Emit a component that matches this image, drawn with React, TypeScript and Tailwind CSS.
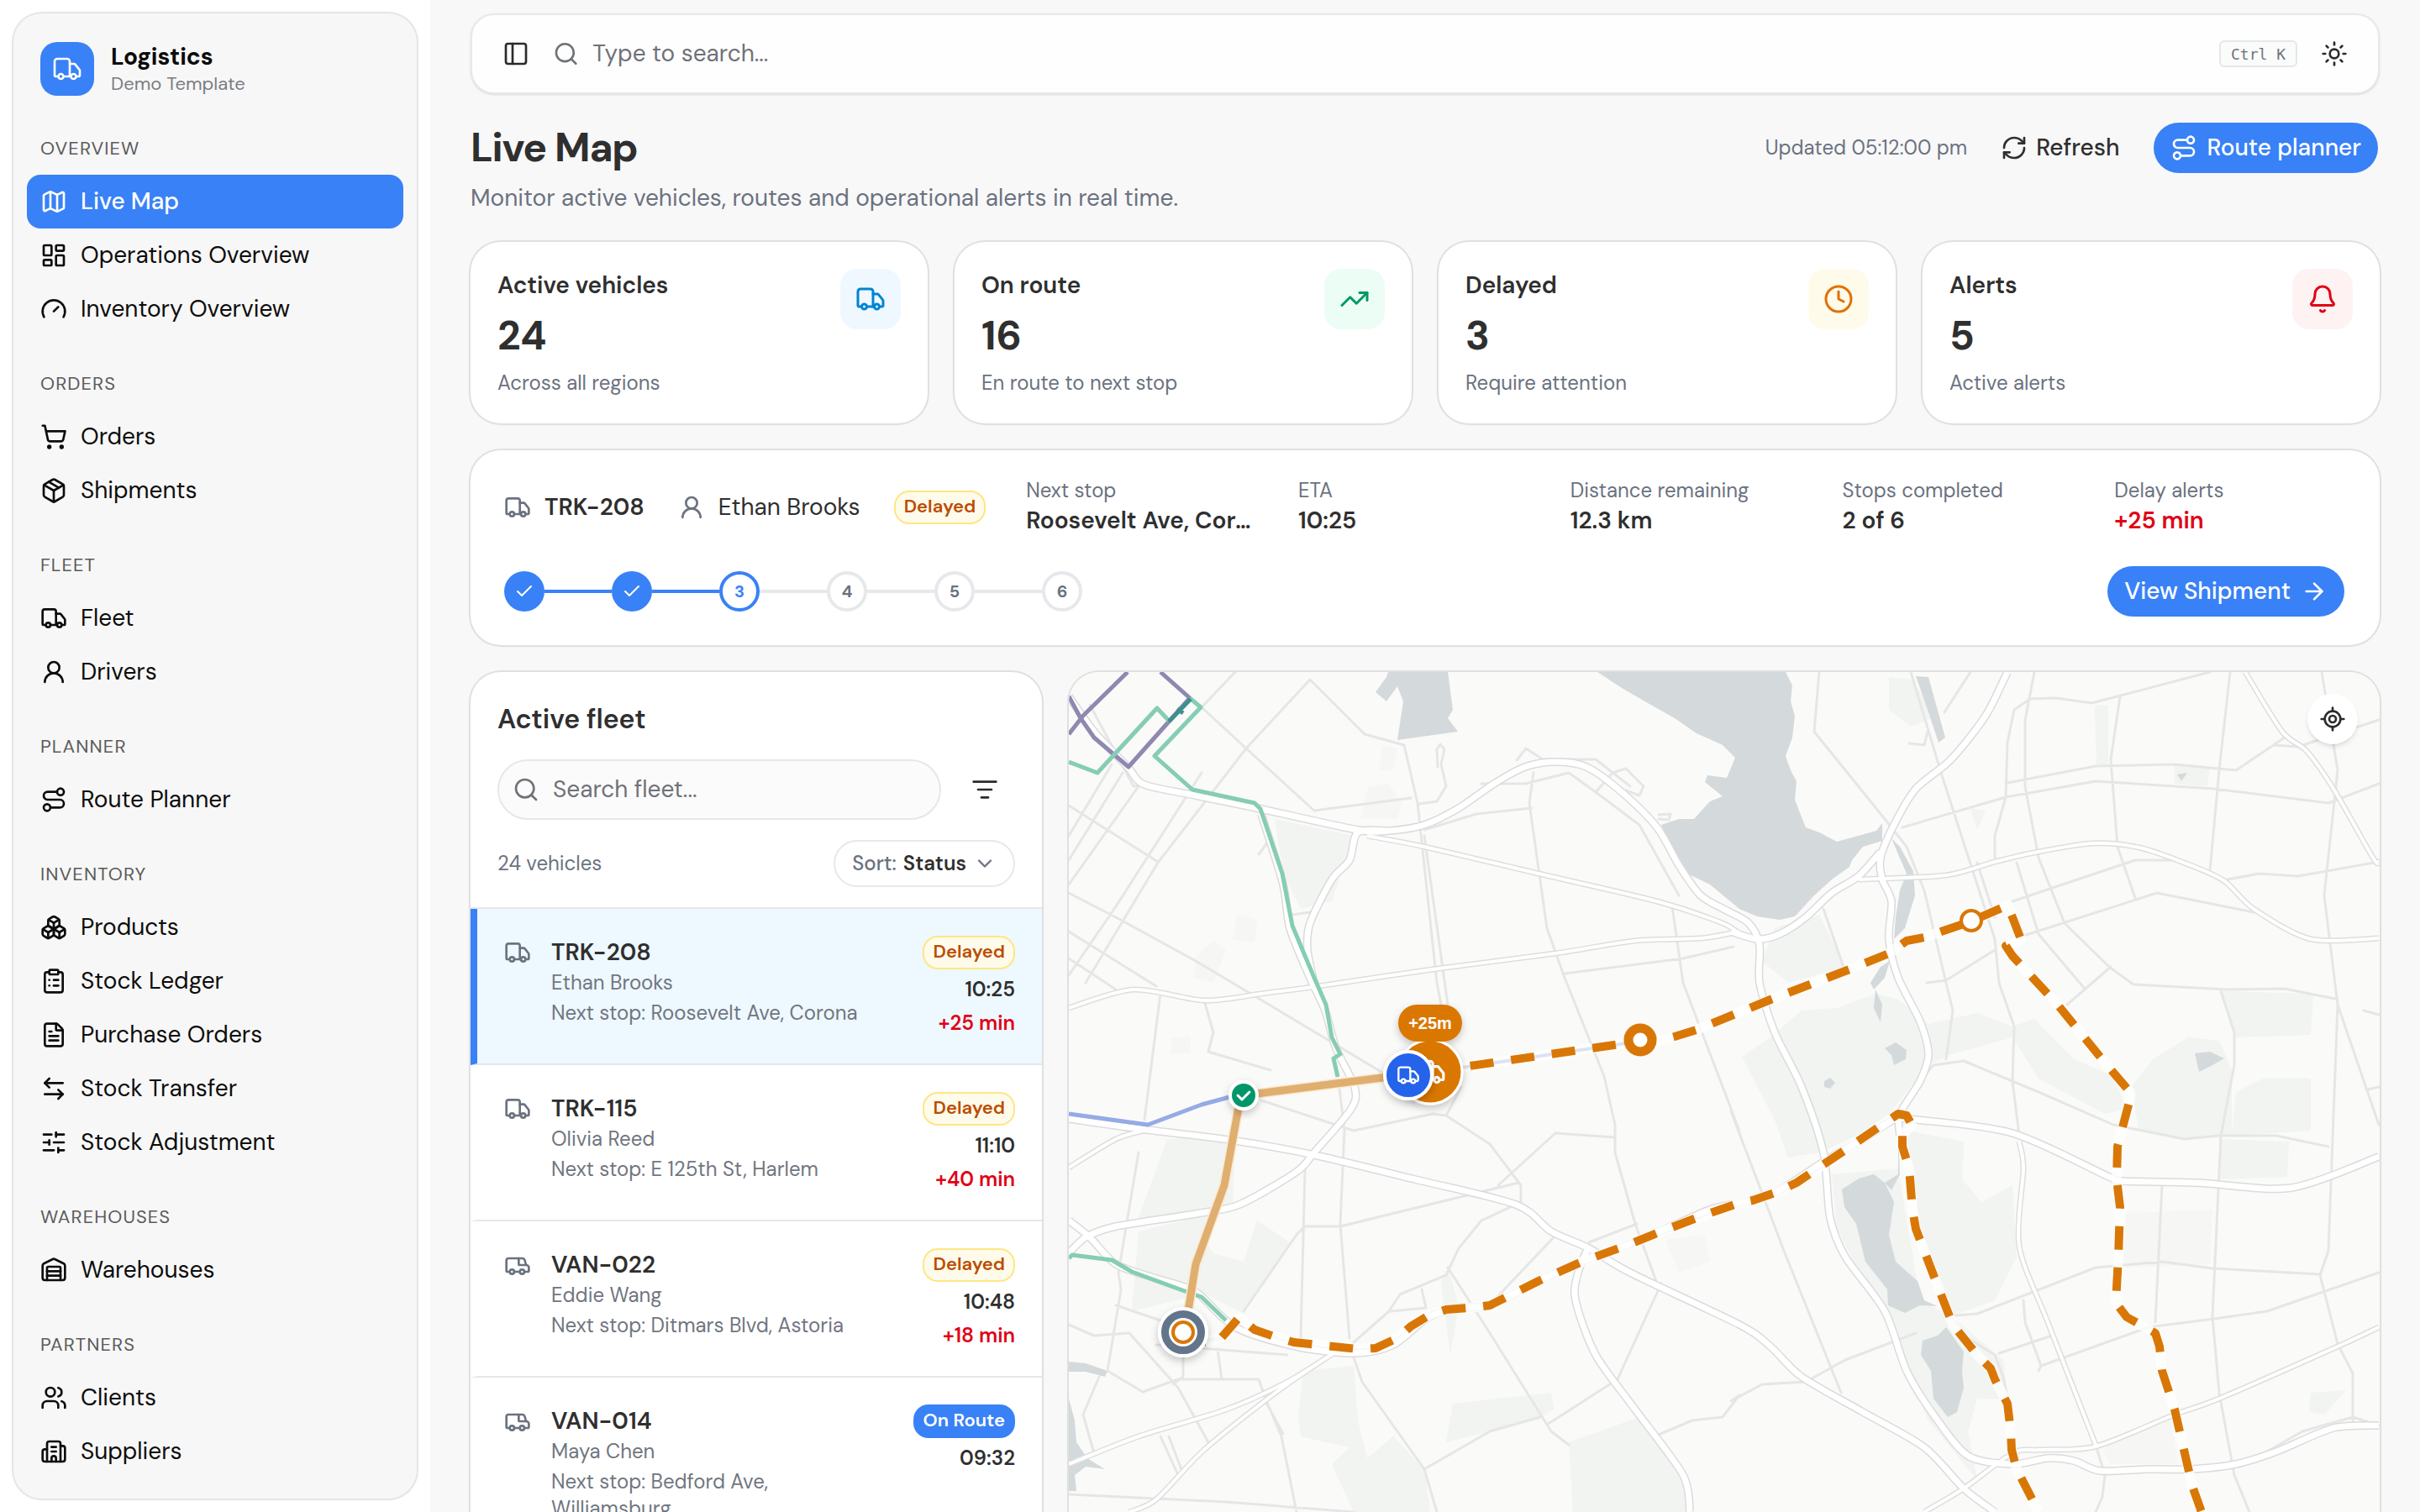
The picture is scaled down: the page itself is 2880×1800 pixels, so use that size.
import React from "react";
import {
  ArrowLeftRight,
  ArrowRight,
  Bell,
  Boxes,
  Building2,
  Check,
  ChevronDown,
  ClipboardList,
  Clock,
  FileText,
  Gauge,
  LayoutDashboard,
  ListFilter,
  LocateFixed,
  Map as MapIcon,
  Package,
  PanelLeft,
  RefreshCw,
  Route,
  Search,
  ShoppingCart,
  SlidersHorizontal,
  Sun,
  TrendingUp,
  Truck,
  UserRound,
  Users,
  Warehouse,
} from "lucide-react";

type IconType = React.ComponentType<{ className?: string; strokeWidth?: number }>;

/* ---------- Sidebar ---------- */

const navGroups: { label: string; items: { name: string; icon: IconType; active?: boolean }[] }[] = [
  {
    label: "Overview",
    items: [
      { name: "Live Map", icon: MapIcon, active: true },
      { name: "Operations Overview", icon: LayoutDashboard },
      { name: "Inventory Overview", icon: Gauge },
    ],
  },
  {
    label: "Orders",
    items: [
      { name: "Orders", icon: ShoppingCart },
      { name: "Shipments", icon: Package },
    ],
  },
  {
    label: "Fleet",
    items: [
      { name: "Fleet", icon: Truck },
      { name: "Drivers", icon: UserRound },
    ],
  },
  { label: "Planner", items: [{ name: "Route Planner", icon: Route }] },
  {
    label: "Inventory",
    items: [
      { name: "Products", icon: Boxes },
      { name: "Stock Ledger", icon: ClipboardList },
      { name: "Purchase Orders", icon: FileText },
      { name: "Stock Transfer", icon: ArrowLeftRight },
      { name: "Stock Adjustment", icon: SlidersHorizontal },
    ],
  },
  { label: "Warehouses", items: [{ name: "Warehouses", icon: Warehouse }] },
  {
    label: "Partners",
    items: [
      { name: "Clients", icon: Users },
      { name: "Suppliers", icon: Building2 },
    ],
  },
];

function Sidebar() {
  return (
    <aside className="w-[512px] shrink-0 bg-white p-4">
      <div className="h-full overflow-hidden rounded-[34px] bg-[#f7f7f7] p-4 shadow-sm ring-2 ring-[#e5e5e5]">
        <div className="flex h-[100px] items-center gap-5 px-4">
          <span className="flex size-16 items-center justify-center rounded-[20px] bg-[#3981f6] text-white">
            <Truck className="size-9" strokeWidth={1.75} />
          </span>
          <div>
            <div className="text-[28px] leading-9 font-bold text-[#0a0a0a]">Logistics</div>
            <div className="text-[22px] leading-7 text-[#7a7d82]">Demo Template</div>
          </div>
        </div>
        <nav aria-label="Main" className="mt-3 flex flex-col gap-6">
          {navGroups.map((group) => (
            <section key={group.label}>
              <h2 className="flex h-16 items-center px-4 text-[22px] tracking-wider text-[#5b5b5b] uppercase">
                {group.label}
              </h2>
              <ul>
                {group.items.map(({ name, icon: Icon, active }) => (
                  <li key={name}>
                    <a
                      href="#"
                      aria-current={active ? "page" : undefined}
                      className={
                        active
                          ? "flex h-16 items-center gap-4 rounded-2xl bg-[#3981f6] px-4 text-[28px] font-medium text-white"
                          : "flex h-16 items-center gap-4 rounded-2xl px-4 text-[28px] text-[#0d0d0d]"
                      }
                    >
                      <Icon className="size-8" strokeWidth={2} />
                      {name}
                    </a>
                  </li>
                ))}
              </ul>
            </section>
          ))}
        </nav>
      </div>
    </aside>
  );
}

/* ---------- Header ---------- */

function TopBar() {
  return (
    <header className="flex h-24 items-center gap-7 rounded-[28px] border-2 border-[#e7e8ec] bg-[#fefefe] px-9 shadow-sm">
      <button type="button" aria-label="Toggle sidebar" className="text-[#2b2b2b]">
        <PanelLeft className="size-8" />
      </button>
      <label className="flex flex-1 items-center gap-4 text-[#6f7278]">
        <Search className="size-8" />
        <input
          type="text"
          aria-label="Search"
          placeholder="Type to search..."
          className="w-full bg-transparent text-[28px] text-[#2b2b2b] outline-none placeholder:text-[#6f7278]"
        />
      </label>
      <kbd className="flex h-8 items-center rounded-md border-2 border-[#e5e7eb] bg-[#fafbfb] px-3 font-['DejaVu_Sans_Mono',monospace] text-[18px] text-[#6f7278]">
        Ctrl K
      </kbd>
      <button type="button" aria-label="Toggle theme" className="text-[#2b2b2b]">
        <Sun className="size-8" />
      </button>
    </header>
  );
}

function PageHeading() {
  return (
    <div className="mt-8 flex items-start justify-between">
      <div>
        <h1 className="text-[48px] leading-16 font-bold tracking-tight text-[#2f2f2f]">Live Map</h1>
        <p className="mt-2 text-[28px] leading-10 text-[#6b7280]">
          Monitor active vehicles, routes and operational alerts in real time.
        </p>
      </div>
      <div className="flex h-16 items-center gap-5 pr-0.5">
        <span className="text-[24px] text-[#6b7280]">Updated 05:12:00 pm</span>
        <button type="button" className="flex h-15 items-center gap-2.5 px-5 text-[28px] font-medium text-[#2f2f2f]">
          <RefreshCw className="size-8" />
          Refresh
        </button>
        <button
          type="button"
          className="flex h-15 items-center gap-3 rounded-full bg-[#3981f6] px-5 text-[28px] font-medium text-white"
        >
          <Route className="size-8" />
          Route planner
        </button>
      </div>
    </div>
  );
}

/* ---------- Statistics ---------- */

const stats: { title: string; value: string; note: string; icon: IconType; tone: string }[] = [
  { title: "Active vehicles", value: "24", note: "Across all regions", icon: Truck, tone: "bg-[#f0f8ff] text-[#0084d1]" },
  { title: "On route", value: "16", note: "En route to next stop", icon: TrendingUp, tone: "bg-[#ecfdf5] text-[#009966]" },
  { title: "Delayed", value: "3", note: "Require attention", icon: Clock, tone: "bg-[#fffbeb] text-[#e17100]" },
  { title: "Alerts", value: "5", note: "Active alerts", icon: Bell, tone: "bg-[#fef2f2] text-[#e10015]" },
];

function Stats() {
  return (
    <div className="mt-8 grid grid-cols-4 gap-8">
      {stats.map(({ title, value, note, icon: Icon, tone }) => (
        <article
          key={title}
          className="flex items-start justify-between rounded-[36px] bg-white px-8 py-8 shadow-sm ring-2 ring-[#e0e0e0]"
        >
          <div>
            <h2 className="text-[28px] leading-10 font-semibold text-[#2f2f2f]">{title}</h2>
            <p className="mt-2 text-[48px] leading-16 font-bold text-[#2f2f2f]">{value}</p>
            <p className="mt-2 text-[24px] leading-8 text-[#6b7280]">{note}</p>
          </div>
          <span className={`flex size-18 items-center justify-center rounded-[20px] ${tone}`}>
            <Icon className="size-9" />
          </span>
        </article>
      ))}
    </div>
  );
}

/* ---------- Selected shipment ---------- */

function StatusBadge({ status }: { status: string }) {
  return status === "Delayed" ? (
    <span className="flex h-10 items-center rounded-[18px] border-2 border-[#fee685] bg-[#fffbeb] px-2.5 pb-1 text-[22px] font-semibold text-[#bb4d00]">
      Delayed
    </span>
  ) : (
    <span className="flex h-10 items-center rounded-[18px] bg-[#3981f6] px-3 pb-1 text-[22px] font-semibold text-white">
      {status}
    </span>
  );
}

const shipmentFacts = [
  { label: "Next stop", value: "Roosevelt Ave, Corona" },
  { label: "ETA", value: "10:25" },
  { label: "Distance remaining", value: "12.3 km" },
  { label: "Stops completed", value: "2 of 6" },
  { label: "Delay alerts", value: "+25 min", alert: true },
];

function Steps() {
  const current = 3;
  return (
    <ol className="flex items-center">
      {[1, 2, 3, 4, 5, 6].map((n) => (
        <li key={n} className="flex items-center">
          {n > 1 && <span className={n <= current ? "h-1 w-20 bg-[#3981f6]" : "h-1 w-20 bg-[#e7e8ec]"} />}
          {n < current ? (
            <span className="flex size-12 items-center justify-center rounded-full bg-[#3981f6] text-white">
              <Check className="size-6" aria-label={`Stop ${n} completed`} />
            </span>
          ) : (
            <span
              className={
                n === current
                  ? "flex size-12 items-center justify-center rounded-full border-4 border-[#3981f6] bg-white text-[20px] font-bold text-[#3981f6]"
                  : "flex size-12 items-center justify-center rounded-full border-4 border-[#e7e8ec] bg-white text-[20px] font-bold text-[#6b7280]"
              }
            >
              {n}
            </span>
          )}
        </li>
      ))}
    </ol>
  );
}

function ShipmentCard() {
  return (
    <section
      aria-label="Selected shipment"
      className="mt-8 rounded-[36px] bg-white px-10 py-8 shadow-sm ring-2 ring-[#e0e0e0]"
    >
      <div className="flex items-center gap-12">
        <div className="flex items-center gap-10">
          <span className="flex items-center gap-4 text-[28px] font-semibold text-[#2f2f2f]">
            <Truck className="size-8 text-[#6b7280]" />
            TRK-208
          </span>
          <span className="flex items-center gap-4 text-[28px] text-[#2f2f2f]">
            <UserRound className="size-8 text-[#6b7280]" />
            Ethan Brooks
          </span>
          <StatusBadge status="Delayed" />
        </div>
        <dl className="grid flex-1 grid-cols-5 gap-12">
          {shipmentFacts.map((fact) => (
            <div key={fact.label} className="min-w-0">
              <dt className="text-[24px] leading-8 text-[#6b7280]">{fact.label}</dt>
              <dd
                className={
                  fact.alert
                    ? "truncate text-[28px] leading-10 font-semibold text-[#e10015]"
                    : "truncate text-[28px] leading-10 font-semibold text-[#2f2f2f]"
                }
              >
                {fact.value}
              </dd>
            </div>
          ))}
        </dl>
      </div>
      <div className="mt-8 flex h-16 items-center justify-between pr-0.5">
        <Steps />
        <button
          type="button"
          className="flex h-15 items-center gap-3 rounded-full bg-[#3981f6] px-5 text-[28px] font-medium text-white"
        >
          View Shipment
          <ArrowRight className="size-8" />
        </button>
      </div>
    </section>
  );
}

/* ---------- Fleet list ---------- */

function Van({ className }: { className?: string }) {
  return (
    <svg
      viewBox="0 0 24 24"
      fill="none"
      stroke="currentColor"
      strokeWidth={2}
      strokeLinecap="round"
      strokeLinejoin="round"
      className={className}
      aria-hidden="true"
    >
      <path d="M13 6v5a1 1 0 0 0 1 1h6.102a1 1 0 0 1 .712.298l.898.91a1 1 0 0 1 .288.702V17a1 1 0 0 1-1 1h-3" />
      <path d="M5 18H3a1 1 0 0 1-1-1V8a2 2 0 0 1 2-2h12c1.1 0 2.1.8 2.4 1.8l1.176 4.2" />
      <path d="M9 18h5" />
      <circle cx="16" cy="18" r="2" />
      <circle cx="7" cy="18" r="2" />
    </svg>
  );
}

const fleet = [
  { id: "TRK-208", driver: "Ethan Brooks", stop: "Roosevelt Ave, Corona", status: "Delayed", eta: "10:25", delay: "+25 min", icon: Truck, selected: true },
  { id: "TRK-115", driver: "Olivia Reed", stop: "E 125th St, Harlem", status: "Delayed", eta: "11:10", delay: "+40 min", icon: Truck },
  { id: "VAN-022", driver: "Eddie Wang", stop: "Ditmars Blvd, Astoria", status: "Delayed", eta: "10:48", delay: "+18 min", icon: Van },
  { id: "VAN-014", driver: "Maya Chen", stop: "Bedford Ave, Williamsburg", status: "On Route", eta: "09:32", icon: Van },
];

function FleetPanel() {
  return (
    <section aria-label="Active fleet" className="h-[1040px] overflow-hidden rounded-[36px] bg-white shadow-sm ring-2 ring-[#e0e0e0]">
      <div className="px-8 pt-8 pb-6">
        <h2 className="text-[32px] leading-12 font-semibold text-[#2f2f2f]">Active fleet</h2>
        <div className="mt-6 flex items-center gap-4">
          <label className="flex h-18 flex-1 items-center gap-4 rounded-full border-2 border-[#e5e7eb] bg-[#fbfbfb] px-4 text-[#6f7278]">
            <Search className="size-8 shrink-0" />
            <input
              type="text"
              aria-label="Search fleet"
              placeholder="Search fleet..."
              className="w-full bg-transparent text-[28px] text-[#2f2f2f] outline-none placeholder:text-[#6f7278]"
            />
          </label>
          <button type="button" aria-label="Filter" className="flex size-18 items-center justify-center text-[#2b2b2b]">
            <ListFilter className="size-8" />
          </button>
        </div>
        <div className="mt-6 flex items-center justify-between">
          <span className="text-[24px] text-[#6b7280]">24 vehicles</span>
          <label className="flex h-14 items-center gap-2 rounded-full border-2 border-[#e7e8ec] px-5 text-[24px] font-medium text-[#6b7280]">
            Sort:
            <select className="field-sizing-content appearance-none bg-transparent font-semibold text-[#2f2f2f] outline-none">
              <option>Status</option>
            </select>
            <ChevronDown className="size-7" />
          </label>
        </div>
      </div>
      <ul className="border-t-2 border-[#e5e7eb]">
        {fleet.map(({ id, driver, stop, status, eta, delay, icon: Icon, selected }) => (
          <li key={id}>
            <button
              type="button"
              className={
                selected
                  ? "flex min-h-[186px] w-full items-start justify-between gap-6 border-b-2 border-l-8 border-b-[#dfe8ef] border-l-[#3981f6] bg-[#eef8ff] pt-8 pr-8 pl-8 text-left"
                  : "flex min-h-[186px] w-full items-start justify-between gap-6 border-b-2 border-l-8 border-b-[#e5e7eb] border-l-transparent pt-8 pr-8 pl-8 text-left"
              }
            >
              <Icon className="mt-1 size-8 shrink-0 text-[#6b7280]" />
              <span className="block flex-1">
                <span className="block text-[28px] leading-10 font-semibold text-[#2f2f2f]">{id}</span>
                <span className="block text-[24px] leading-8 text-[#71767f]">{driver}</span>
                <span className="mt-1 block text-[24px] leading-8 text-[#71767f]">Next stop: {stop}</span>
              </span>
              <span className="flex flex-col items-end pl-3">
                <StatusBadge status={status} />
                <span className="mt-1 text-[24px] leading-10 font-semibold text-[#2f2f2f]">{eta}</span>
                {delay && <span className="text-[24px] leading-10 font-semibold text-[#e10015]">{delay}</span>}
              </span>
            </button>
          </li>
        ))}
      </ul>
    </section>
  );
}

/* ---------- Map ---------- */

type Point = [number, number];

function project(data: string): Point[] {
  return data.split("|").flatMap((part, tile) =>
    part
      .trim()
      .split(/\s+/)
      .filter(Boolean)
      .map((pair): Point => {
        const [x, y] = pair.split(",").map(Number);
        return [Math.round((tile ? 788 : -22) + x * 0.523), Math.round(y * 0.6505 - 20)];
      }),
  );
}

function straight(data: string) {
  return "M" + project(data).map((p) => p.join(" ")).join("L");
}

function smooth(data: string) {
  const pts = project(data);
  let d = `M${pts[0][0]} ${pts[0][1]}`;
  for (let i = 0; i < pts.length - 1; i++) {
    const a = pts[i - 1] ?? pts[i];
    const b = pts[i];
    const c = pts[i + 1];
    const e = pts[i + 2] ?? c;
    const k = 7;
    d += `C${b[0] + (c[0] - a[0]) / k} ${b[1] + (c[1] - a[1]) / k} ${c[0] - (e[0] - b[0]) / k} ${c[1] - (e[1] - b[1]) / k} ${c[0]} ${c[1]}`;
  }
  return d;
}

const parks = [
  "510,300 690,330 640,450 570,465 530,400",
  "265,885 420,880 415,1000 330,1025 200,1030",
  "200,1055 370,1020 350,1070 370,1095 440,1110 470,1035 545,1075 440,1205 350,1168 185,1200",
  "565,1390 575,1310 690,1300 700,1400 720,1470 780,1430 850,1490 865,1568 690,1568 640,1480 680,1450 570,1430",
  "900,1440 915,1370 1140,1350 1145,1380 1115,1395 1000,1420",
  "1180,1440 1340,1395 1440,1500 1455,1568 1190,1568",
  "890,1150 905,1120 930,1190 910,1280",
  "|100,500 200,475 260,570 130,600 70,560",
  "|25,735 90,700 160,650 240,645 330,620 380,630 450,675 560,655 640,680 690,665 780,740 870,770 900,830 850,840 700,775 640,700 500,730 450,750 400,800 340,860 200,910 130,920 100,850",
  "|910,790 960,740 1040,700 1110,705 1140,760 1140,880 1040,885 930,870",
  "|1115,615 1325,620 1320,695 1150,700",
  "|1150,800 1210,775 1320,775 1320,870 1140,880",
  "|1110,885 1270,890 1265,955 1110,960",
  "|400,870 530,890 525,960 570,1000 640,970 650,1100 600,1180 500,1210 430,1050",
  "|230,950 380,940 430,1180 500,1210 620,1290 630,1360 560,1360 540,1420 560,1510 450,1400 340,1200 240,1050",
  "|360,40 410,45 470,110 410,130 360,100",
  "|828,90 858,92 858,200 832,200",
  "|1010,200 1090,205 1085,240 1010,235",
  "|1320,1350 1400,1345 1350,1390 1315,1385",
  "|545,280 580,285 560,320",
];

const blocks = [
  "725,240 770,235 800,270 790,300 705,300",
  "755,165 790,170 780,210 750,210",
  "330,550 370,522 400,540 370,600 325,590",
  "425,475 470,485 465,525 415,520",
  "275,700 320,698 318,728 275,728",
  "1400,1070 1490,1060 1500,1110 1430,1130",
  "|900,1020 1095,1015 1090,1115 890,1120",
  "|840,1440 1000,1400 1020,1480 860,1480",
];

const water = [
  "768,30 905,30 915,100 905,115 928,140 790,155 803,85 790,57 765,85 740,68 765,40",
  "1245,30 1300,60 1360,88 1420,115 1470,143 1530,165 1558,188 1540,225 1495,220 1490,232 1530,258 1500,268 1465,300 1430,300 1390,310 1410,345 1450,400 1500,420 1568,465 | 60,478 110,484 145,478 190,440 230,410 270,388 275,375 300,350 345,340 345,308 330,322 240,342 200,325 170,315 155,285 145,265 150,230 135,210 125,185 140,150 145,110 135,85 140,55 125,30",
  "|365,335 385,350 415,395 418,440 395,500 370,520 375,480 385,430 400,400 380,365",
  "|340,570 362,560 350,590 325,612 318,600",
  "|328,612 345,640 340,672 325,645",
  "|350,720 375,708 400,722 398,740 370,750 365,732",
  "|212,780 225,773 237,783 225,793 213,790",
  "|253,978 290,958 325,950 350,965 370,1000 360,1060 375,1110 425,1145 440,1180 470,1192 430,1190 395,1203 358,1190 355,1160 305,1110 285,1040 258,1010",
  "|435,1255 470,1245 490,1230 530,1275 525,1310 530,1340 515,1385 493,1395 460,1360 455,1310 433,1280",
  "|350,965 380,950 380,880 385,950 365,980",
  "|1055,728 1090,725 1122,738 1095,750 1065,762",
  "|1015,218 1038,215 1025,231",
  "|420,38 450,40 488,150 472,160 445,95",
  "42,1293 80,1296 130,1310 125,1320 80,1312 42,1312",
  "42,1360 55,1400 60,1440 85,1470 125,1490 80,1485 55,1500 60,1530 42,1530",
];

const streets = [
  "42,275 245,378",
  "42,435 150,480 330,560 520,650 760,765",
  "42,505 240,605",
  "42,555 150,612",
  "42,330 140,200",
  "42,375 165,215",
  "42,420 200,240",
  "42,585 150,460 345,215",
  "80,600 245,380 445,170 590,45 715,145 805,165 835,270",
  "420,30 345,95 445,170 600,285 820,262",
  "90,90 190,240 215,237",
  "835,270 880,600 890,640",
  "850,330 905,640",
  "1100,215 1090,270 1130,500 1170,590 1260,770 1285,860 1285,910 1330,1040 1380,1150",
  "850,320 970,290 1095,280",
  "980,235 1080,235 1180,215 1240,250 1340,310 1430,440",
  "1170,583 1440,555 1555,533",
  "1415,460 1440,600 1568,870 | 0,835 120,1090 250,1350",
  "250,620 215,850",
  "350,632 370,690 360,725 500,760",
  "480,815 690,870 870,840 900,843 1000,895 1070,970 1070,1000 980,1035 930,1085 900,1135 795,1170 770,1200 690,1258",
  "900,843 935,790",
  "580,940 570,1250",
  "655,780 670,870 660,1040 680,1250",
  "660,1045 580,1045 560,1060 440,1200",
  "660,1045 1065,965",
  "1020,970 1150,875 1285,882",
  "775,1200 855,1195 845,1160",
  "905,1120 1000,1240 1140,1420 1180,1445",
  "1010,1180 1145,1065",
  "1225,1075 1335,1040",
  "200,910 155,1130 160,1160 130,1310 210,1348 290,1325 475,1325 490,1360 525,1430 560,1568",
  "240,1262 540,1280",
  "302,1280 302,1320 280,1335",
  "380,1270 390,1325",
  "150,1190 280,1225",
  "110,1320 75,1390 100,1460",
  "180,1240 290,1340 360,1440",
  "42,1225 100,1245 180,1240",
  "690,1285 710,1330 850,1490 880,1568",
  "850,1490 1000,1420 1115,1395",
  "1130,1408 1290,1325 1390,1150",
  "1375,1430 1460,1400 1530,1395 1568,1355 | 0,1365 70,1335 170,1330 260,1290 420,1240",
  "42,1535 400,1550 690,1568",
  "250,1430 290,1500",
  "270,1430 300,1495",
  "490,1365 530,1425",
  "840,272 880,268 900,240 890,200 897,172 888,163 880,172 882,205",
  "1062,192 1082,170 1120,190 1240,190 1320,240",
  "1240,250 1280,215 1310,208 1350,240 1340,257 1310,248",
  "1385,292 1412,290 1408,302 1385,300",
  "475,365 500,335",
  "550,475 590,470",
  "|200,30 190,140 350,300 400,350 440,430 490,600 505,650 490,740",
  "|410,30 480,220 600,520 610,600 645,680 640,780 655,880",
  "|485,105 545,30",
  "|405,162 440,165 448,140",
  "|1090,30 880,75 820,88 740,78 680,80 645,100 630,160 625,260 600,330 600,370",
  "|690,30 670,120 670,240 700,370 760,490 860,570 915,602 1130,612 1260,610 1375,628",
  "|885,75 865,190 880,350 920,445",
  "|1135,30 1110,210 1090,395",
  "|630,233 830,203 1010,200 1150,210 1260,150",
  "|390,315 625,260 830,230 1100,245 1360,270 1475,235",
  "|640,450 920,375 1025,375",
  "|660,515 970,435 1190,470",
  "|1120,412 1200,400 1290,405 1475,378",
  "|445,600 490,595 600,540",
  "|1345,30 1380,210 1350,440 1380,640 1360,1090 1340,1135 1380,1260 1415,1315 1415,1400",
  "|1380,640 1475,860",
  "|1115,615 1145,690 1145,750 1115,880 1095,1210 1110,1350 1145,1500 1180,1568",
  "|430,780 460,750 530,742 700,800 870,860 1030,885 1110,880 1240,880 1360,900",
  "|490,1210 560,1205 830,1120 980,1110 1095,1122 1340,1133",
  "|980,970 965,1220",
  "|700,1310 705,1300 950,1230 1100,1215 1220,1200 1475,1130",
  "|610,1278 730,1245",
  "|665,1180 670,1220 705,1300",
  "|830,1445 850,1500 845,1540 830,1568",
  "|650,380 700,510 805,610",
  "|560,380 600,480",
  "|765,640 865,570",
  "|1440,650 1475,658",
  "|1235,165 1290,168 1475,118",
  "|500,1210 540,1250 600,1280 620,1320 640,1400",
  "|1450,795 1475,790",
  "|210,465 260,580",
  "|1170,1480 1300,1420 1415,1395 1475,1410",
];

const avenues = [
  "42,645 190,612 350,632 480,620 610,605 870,575 1150,545 1330,523 1480,518 1568,505",
  "720,330 850,350 1110,400 1380,450 1530,490 1568,510",
  "|290,410 490,403 600,378 700,360 825,345 930,352 1030,380 1120,412 1190,465 1320,520 1475,518",
  "42,1480 200,1430 400,1380 540,1330 650,1275",
  "180,1568 240,1545 350,1455 520,1345 650,1275",
  "42,938 150,885 220,868",
  "|655,890 665,940 655,1080 720,1220 830,1445",
  "|1170,30 1255,140 1310,175 1370,245 1460,370 1475,378",
  "|440,1568 530,1525 640,1460 700,1455 830,1448 1010,1390 1110,1360 1380,1265 1475,1230",
];

const highways = [
  "42,75 100,140 175,205 215,237 330,257 470,280 700,320 770,322 850,310 930,280 1010,235 1080,205 1150,195 1220,205 1300,250 1380,315 1430,385 1480,440 1540,468 | 40,490 65,530 65,600 100,690 160,790 210,910 225,1030 260,1100 350,1200 400,1310 460,1390 540,1465 640,1480 720,1470 780,1475 840,1492 950,1490 1050,1490 1150,1480 1240,1458 1370,1415 1475,1410",
  "|630,30 580,110 500,190 420,245 370,310 340,370 345,410 365,450 360,520 380,590 430,670 450,730 430,780 385,840 385,880",
  "|0,505 60,520 110,510 170,480 230,435 290,405 340,360",
  "770,322 700,325 680,375 640,410 590,490 585,540 600,600",
  "480,290 530,420 545,500 590,590 625,650 650,720 692,790 685,830 600,910 560,945 430,1005 330,1022 150,1045 80,1065 42,1095",
  "42,848 220,868 420,888 600,915 830,960 1060,1005 1140,1055 1225,1085 1320,1130 1568,1225 | 90,1265 160,1320 300,1385 440,1450 530,1525 600,1568",
  "42,1035 90,1065 150,1115 240,1140 330,1165 420,1230 560,1265 690,1278 780,1262 860,1212 930,1195 1000,1190 1110,1145 1215,1108 1310,1080 1400,1050 1500,1015 1568,1003 | 60,995 110,980 215,925 300,885 370,850 420,850 640,875 860,955 890,962 1060,965 1275,975 1475,918",
  "1225,1080 1200,1130 1195,1180 1240,1280 1330,1380 1440,1500 1455,1568",
];

const eastboundRoute =
  "875,760 955,752 1310,710 1342,703 1385,705 1420,698 1470,685 1555,658 | 90,630 180,603 270,575 360,545 400,522 440,517 500,500 545,487 630,458 640,480 660,520 625,532 640,550 740,637 850,745 908,800 908,812 880,900 877,960 885,1010 882,1100 875,1185 900,1212 965,1240 975,1265 980,1310 1010,1380 1050,1520 1070,1568";
const returnRoute =
  "350,1258 390,1248 430,1212 465,1235 515,1248 555,1257 700,1270 740,1268 790,1250 820,1228 865,1207 900,1198 955,1195 1000,1190 1045,1172 1110,1145 1215,1108 1310,1080 1390,1055 1480,1027 1568,1003 | 50,997 105,983 150,965 215,930 265,903 345,860 380,840 400,842 412,860 390,880 390,900 405,940 413,1015 420,1050 470,1155 505,1225 560,1280 590,1305 600,1325 630,1370 637,1420 638,1455 650,1490 685,1543 700,1568";

function CityMap() {
  return (
    <svg
      viewBox="0 0 1560 1040"
      preserveAspectRatio="xMinYMin slice"
      className="absolute inset-0 size-full"
      role="img"
      aria-label="Live positions and routes"
      fill="none"
      strokeLinejoin="round"
    >
      <defs>
        <filter id="lift" x="-40%" y="-40%" width="180%" height="180%">
          <feDropShadow dx="0" dy="4" stdDeviation="5" floodOpacity="0.22" />
        </filter>
      </defs>
      <rect width="1560" height="1040" fill="#fafaf8" />
      <path d={parks.map((d) => straight(d) + "Z").join("")} fill="#f1f4f0" />
      <path d={blocks.map((d) => straight(d) + "Z").join("")} fill="#f6f6f5" />
      <path d={water.map((d) => straight(d) + "Z").join("")} fill="#d4d9dc" />
      <path d={streets.map(straight).join("")} stroke="#e6e6e6" strokeWidth="3" strokeLinecap="round" />
      <path d={avenues.map(smooth).join("")} stroke="#dededf" strokeWidth="7" />
      <path d={highways.map(smooth).join("")} stroke="#dbdbdd" strokeWidth="10" />
      <path d={avenues.map(smooth).join("")} stroke="#ffffff" strokeWidth="4" />
      <path d={highways.map(smooth).join("")} stroke="#ffffff" strokeWidth="7" />

      {/* Other vehicles */}
      <g strokeWidth="5">
        <path d={straight("42,145 75,110 175,30") + straight("250,30 318,78 177,204 100,150 68,115 42,75")} stroke="#8f88b1" />
        <path
          d={
            straight("42,195 108,215 243,97 270,120") +
            straight("318,78 343,95 238,185 323,246 465,270 478,282 528,400 550,495 600,590 628,640 640,700 660,730 645,738 653,772") +
            straight("42,1103 50,1097 140,1107 185,1128 300,1162 345,1175 400,1218")
          }
          stroke="#85cdb3"
        />
        <path d={straight("270,122 320,80") + straight("288,98 303,106")} stroke="#3f8f90" />
        <path d={straight("355,1253 385,1252 402,1238")} stroke="#d3ebe2" />
        <path d={straight("42,840 222,860 345,822 415,807")} stroke="#94abe6" />
      </g>

      {/* Selected vehicle */}
      <path d={straight("312,1210 330,1115 395,970 430,820 440,805 800,768")} stroke="#fbe9d2" strokeWidth="12" />
      <path d={straight("312,1210 330,1115 395,970 430,820 440,805 800,768")} stroke="#dfaf70" strokeWidth="9" />
      <path d={straight(eastboundRoute) + straight(returnRoute)} stroke="#ffffff" strokeOpacity="0.75" strokeWidth="12" />
      <path d={straight("935,755 1310,710")} stroke="#dde2f3" strokeWidth="4" />
      <g stroke="#d97706" strokeWidth="10" strokeDasharray="28 21">
        <path d={straight(eastboundRoute)} strokeDashoffset="7" />
        <path d={straight(returnRoute)} strokeDashoffset="27" />
      </g>

      {/* Stops */}
      <circle cx="680" cy="438" r="14" fill="#ffffff" stroke="#d97706" strokeWidth="11" />
      <circle cx="1074" cy="296" r="12" fill="#ffffff" stroke="#d97706" strokeWidth="4" />
      <circle cx="208" cy="504" r="16" fill="#059669" stroke="#ffffff" strokeWidth="4" filter="url(#lift)" />
      <path d="M201 504l5 5 9-9" stroke="#ffffff" strokeWidth="3" strokeLinecap="round" />

      {/* Depot */}
      <circle cx="136" cy="786" r="28" fill="#64748b" stroke="#ffffff" strokeWidth="4" filter="url(#lift)" />
      <circle cx="136" cy="786" r="17" fill="#ffffff" />
      <circle cx="136" cy="786" r="12" stroke="#d97706" strokeWidth="4" />

      {/* Vehicle */}
      <g filter="url(#lift)">
        <circle cx="430" cy="476" r="38" fill="#d97706" stroke="#ffffff" strokeWidth="3" />
        <rect x="392" y="396" width="76" height="44" rx="22" fill="#d97706" />
      </g>
      <Truck x={411} y={457} width={38} height={38} color="#ffffff" />
      <text
        x="430"
        y="425"
        textAnchor="middle"
        fill="#ffffff"
        className="font-['Liberation_Sans',Arial,sans-serif] text-[20px] font-bold"
      >
        +25m
      </text>
      <circle cx="404" cy="480" r="28" fill="#2563eb" stroke="#ffffff" strokeWidth="4" filter="url(#lift)" />
      <Truck x={390} y={466} width={28} height={28} color="#ffffff" />
    </svg>
  );
}

function MapPanel() {
  return (
    <section aria-label="Map" className="relative h-[1040px] overflow-hidden rounded-[36px] bg-[#fafaf8] shadow-sm ring-2 ring-[#e0e0e0]">
      <CityMap />
      <button
        type="button"
        aria-label="Center map"
        className="absolute top-[26px] right-[26px] flex size-15 items-center justify-center rounded-full bg-white text-[#2b2b2b] shadow-md"
      >
        <LocateFixed className="size-8" />
      </button>
    </section>
  );
}

export default function App() {
  return (
    <div className="flex h-screen overflow-hidden bg-[#f8f8f8] font-['DM_Sans',Inter,sans-serif] antialiased">
      <Sidebar />
      <main className="min-w-0 flex-1 overflow-y-auto px-12 py-4 [scrollbar-width:none]">
        <TopBar />
        <PageHeading />
        <Stats />
        <ShipmentCard />
        <div className="mt-8 grid grid-cols-[680px_1fr] gap-8">
          <FleetPanel />
          <MapPanel />
        </div>
      </main>
    </div>
  );
}
